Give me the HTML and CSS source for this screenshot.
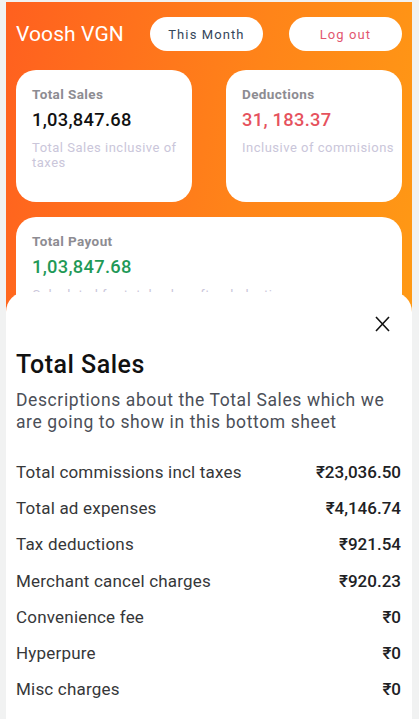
FILE: index.html
```html
<!DOCTYPE html>
<html lang="en">
<head>
<meta charset="utf-8">
<title>Voosh VGN</title>
<link rel="stylesheet" href="styles.css">
</head>
<body>
<div class="app">
  <header class="header">
    <div class="brand">Voosh VGN</div>
    <button class="pill pill-month">This Month</button>
    <button class="pill pill-logout">Log out</button>
  </header>
  <section class="cards">
    <div class="card">
      <div class="card-label">Total Sales</div>
      <div class="card-value">1,03,847.68</div>
      <div class="card-desc">Total Sales inclusive of taxes</div>
    </div>
    <div class="card">
      <div class="card-label">Deductions</div>
      <div class="card-value value-red">31, 183.37</div>
      <div class="card-desc">Inclusive of commisions</div>
    </div>
    <div class="card card-wide">
      <div class="card-label">Total Payout</div>
      <div class="card-value value-green">1,03,847.68</div>
      <div class="card-desc">Calculated for total sales after deductions</div>
    </div>
  </section>
  <section class="sheet">
    <div class="sheet-top">
      <button class="close" aria-label="Close">
        <svg width="15" height="16" viewBox="0 0 15 16"><path d="M1 1 L14 15 M14 1 L1 15" stroke="#111" stroke-width="1.6" fill="none"/></svg>
      </button>
    </div>
    <h2 class="sheet-title">Total Sales</h2>
    <p class="sheet-desc">Descriptions about the Total Sales which we are going to show in this bottom sheet</p>
    <ul class="rows">
      <li class="row"><span>Total commissions incl taxes</span><span class="amt">₹23,036.50</span></li>
      <li class="row"><span>Total ad expenses</span><span class="amt">₹4,146.74</span></li>
      <li class="row"><span>Tax deductions</span><span class="amt">₹921.54</span></li>
      <li class="row"><span>Merchant cancel charges</span><span class="amt">₹920.23</span></li>
      <li class="row"><span>Convenience fee</span><span class="amt">₹0</span></li>
      <li class="row"><span>Hyperpure</span><span class="amt">₹0</span></li>
      <li class="row"><span>Misc charges</span><span class="amt">₹0</span></li>
    </ul>
  </section>
</div>
</body>
</html>
```

FILE: styles.css
```css
* { box-sizing: border-box; }
html, body { margin: 0; padding: 0; }
body {
  background: #f1f2f2;
  font-family: Roboto, "Noto Sans", "DejaVu Sans", sans-serif;
  height: 719px;
  overflow: hidden;
}
.app {
  position: relative;
  margin: 2px 7px 0 6px;
  height: 717px;
  overflow: hidden;
  background: linear-gradient(100deg, #ff601f 0%, #ff8419 50%, #ffa113 100%);
}
.header {
  display: flex;
  align-items: center;
  justify-content: space-between;
  height: 34px;
  margin-top: 15px;
  padding: 0 10px;
}
.brand {
  color: #fff;
  font-size: 21px;
  font-weight: 400;
  letter-spacing: 0.1px;
}
.pill {
  width: 113px;
  height: 34px;
  border: none;
  border-radius: 17px;
  background: #fff;
  font-family: Roboto, sans-serif;
  font-size: 13px;
  letter-spacing: 1.1px;
  padding: 0;
}
.pill-month { color: #34465a; }
.pill-logout { color: #e2566f; }
.cards {
  display: grid;
  grid-template-columns: 176px 176px;
  column-gap: 34px;
  row-gap: 15px;
  margin-top: 19px;
  padding: 0 10px;
}
.card {
  background: #fff;
  border-radius: 20px;
  height: 132px;
  padding: 16px 6px 0 16px;
}
.card-wide { grid-column: 1 / 3; }
.card-label {
  color: #8d8c92;
  font-size: 13.5px;
  font-weight: 700;
  letter-spacing: 0.4px;
  line-height: 16px;
}
.card-value {
  margin-top: 7px;
  color: #111;
  font-size: 18.3px;
  font-weight: 500;
  line-height: 22px;
  letter-spacing: 0.3px;
}
.value-red { color: #e6525d; }
.value-green { color: #1f9957; }
.card-desc {
  margin-top: 9px;
  color: #cac6da;
  font-size: 13px;
  line-height: 15px;
  letter-spacing: 0.5px;
}
.sheet {
  position: absolute;
  left: 0;
  right: 0;
  top: 290px;
  bottom: 0;
  background: #fff;
  border-radius: 20px 20px 0 0;
  padding: 0 10px;
}
.sheet-top {
  display: flex;
  justify-content: flex-end;
  padding-top: 24px;
  padding-right: 12px;
  height: 40px;
}
.close {
  border: none;
  background: none;
  padding: 0;
  width: 15px;
  height: 16px;
  display: block;
}
.close svg { display: block; }
.sheet-title {
  margin: 18px 0 0 0;
  font-size: 25px;
  font-weight: 500;
  line-height: 30px;
  letter-spacing: 0.5px;
  color: #111;
}
.sheet-desc {
  margin: 9px 0 0 0;
  font-size: 17.5px;
  line-height: 22px;
  color: #4b4f58;
  letter-spacing: 0.6px;
}
.rows {
  list-style: none;
  margin: 21px 0 0 0;
  padding: 0;
}
.row {
  display: flex;
  justify-content: space-between;
  align-items: center;
  height: 36.2px;
  font-size: 17px;
  letter-spacing: 0.2px;
  color: #363739;
  padding-right: 1px;
}
.amt {
  font-weight: 500;
  letter-spacing: 0;
  color: #202124;
}
```
